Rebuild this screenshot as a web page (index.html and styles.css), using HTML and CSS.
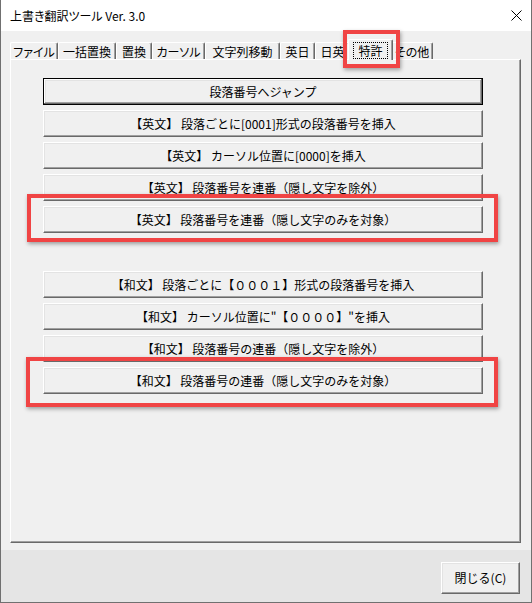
FILE: index.html
```html
<!DOCTYPE html>
<html lang="ja">
<head>
<meta charset="utf-8">
<title>上書き翻訳ツール Ver. 3.0</title>
<link rel="stylesheet" href="styles.css">
</head>
<body>
<div class="window">
  <header class="titlebar">
    <span class="title">上書き翻訳ツール Ver. 3.0</span>
    <svg class="close-x" width="11" height="11" viewBox="0 0 11 11"><path d="M0.5 0.5 L10.5 10.5 M10.5 0.5 L0.5 10.5" stroke="#000" stroke-width="1" fill="none"/></svg>
  </header>
  <main class="client">
    <nav class="tabs">
      <div class="tab tab-file">ファイル</div>
      <div class="tab tab-bulk">一括置換</div>
      <div class="tab tab-replace">置換</div>
      <div class="tab tab-cursor">カーソル</div>
      <div class="tab tab-move">文字列移動</div>
      <div class="tab tab-ej">英日</div>
      <div class="tab tab-je">日英</div>
      <div class="tab tab-patent tab-active"><span class="focus">特許</span></div>
      <div class="tab tab-other">その他</div>
    </nav>
    <section class="panel">
      <div class="group">
        <button class="btn btn-wide btn-default">段落番号へジャンプ</button>
        <button class="btn btn-wide">【英文】 段落ごとに[0001]形式の段落番号を挿入</button>
        <button class="btn btn-wide">【英文】 カーソル位置に[0000]を挿入</button>
        <button class="btn btn-wide">【英文】 段落番号を連番（隠し文字を除外）</button>
        <button class="btn btn-wide">【英文】 段落番号を連番（隠し文字のみを対象）</button>
      </div>
      <div class="group group-second">
        <button class="btn btn-wide">【和文】 段落ごとに【０００１】形式の段落番号を挿入</button>
        <button class="btn btn-wide">【和文】 カーソル位置に"【００００】"を挿入</button>
        <button class="btn btn-wide">【和文】 段落番号の連番（隠し文字を除外）</button>
        <button class="btn btn-wide">【和文】 段落番号の連番（隠し文字のみを対象）</button>
      </div>
    </section>
  </main>
  <footer class="footer">
    <button class="btn btn-close">閉じる(C)</button>
  </footer>
  <div class="mark mark-tab"></div>
  <div class="mark mark-en"></div>
  <div class="mark mark-ja"></div>
</div>
</body>
</html>
```
FILE: styles.css
```css
html, body {
  margin: 0;
  padding: 0;
  background: #ffffff;
}

body {
  font-family: "Noto Sans CJK JP", "Noto Sans", sans-serif;
  font-size: 12px;
  color: #000;
}

.window {
  position: relative;
  width: 532px;
  height: 603px;
  box-sizing: border-box;
  border: 1px solid #707070;
  border-top: none;
  display: flex;
  flex-direction: column;
  background: #f0f0f0;
}

.titlebar {
  height: 31px;
  flex: none;
  background: #ffffff;
  display: flex;
  align-items: center;
  justify-content: space-between;
  padding: 0 9px 0 9px;
}

.title {
  font-size: 12px;
  line-height: 1;
  font-feature-settings: "palt";
  padding-top: 1px;
}

.close-x {
  display: block;
}

.client {
  flex: 1;
  display: flex;
  flex-direction: column;
  padding: 11px 10px 7px 9px;
  background: #f0f0f0;
}

.tabs {
  display: flex;
  height: 17px;
  position: relative;
  z-index: 1;
}

.tab {
  box-sizing: border-box;
  height: 17px;
  padding-top: 2px;
  background: #f0f0f0;
  border-top: 1px solid #ffffff;
  border-left: 1px solid #ffffff;
  border-right: 1px solid #696969;
  box-shadow: inset -1px 0 #a0a0a0;
  border-radius: 2px 2px 0 0;
  font-size: 12px;
  line-height: 13px;
  font-feature-settings: "palt";
  white-space: nowrap;
  text-align: center;
  flex: none;
}

.tab-file { width: 48px; }
.tab-bulk { width: 58px; }
.tab-replace { width: 36px; }
.tab-cursor { width: 53px; }
.tab-move { width: 75px; }
.tab-ej { width: 35px; }
.tab-je { width: 35px; }
.tab-patent { width: 41px; }
.tab-other { width: 42px; }

.tab-active {
  width: 45px;
  height: 21px;
  margin: -3px -2px 0;
  padding-top: 3px;
  position: relative;
  z-index: 2;
}

.focus {
  display: inline-block;
  outline: 1px dotted #000;
  outline-offset: 0;
  padding: 1px 4px;
  line-height: 13px;
}

.panel {
  height: 484px;
  box-sizing: border-box;
  background: #f0f0f0;
  border-top: 1px solid #ffffff;
  border-left: 1px solid #ffffff;
  border-right: 1px solid #696969;
  border-bottom: 1px solid #696969;
  box-shadow: inset -1px -1px #a0a0a0;
  padding: 18px 0 0 32px;
}

.group {
  display: flex;
  flex-direction: column;
  gap: 5px;
}

.group-second {
  margin-top: 38px;
}

.btn {
  box-sizing: border-box;
  background: #f0f0f0;
  border: 1px solid;
  border-color: #ffffff #696969 #696969 #ffffff;
  box-shadow: inset -1px -1px #a0a0a0, inset 1px 1px #e3e3e3;
  font-family: "Noto Sans CJK JP", "Noto Sans", sans-serif;
  font-size: 12px;
  line-height: 1;
  color: #000;
  padding: 0;
  margin: 0;
  text-align: center;
}

.btn-wide {
  width: 440px;
  height: 27px;
}

.btn-default {
  border-color: #000;
  box-shadow: inset -1px -1px #696969, inset 1px 1px #ffffff, inset -2px -2px #a0a0a0, inset 2px 2px #e3e3e3;
}

.footer {
  height: 52px;
  flex: none;
  box-sizing: border-box;
  background: #e5e5e5;
  display: flex;
  justify-content: flex-end;
  align-items: flex-start;
  padding: 12px 11px 0 0;
}

.btn-close {
  width: 79px;
  height: 32px;
}

.mark {
  position: absolute;
  box-sizing: border-box;
  border: 4px solid #f04444;
  box-shadow: 1px 2px 4px rgba(0, 0, 0, 0.35);
  z-index: 5;
}

.mark-tab {
  left: 342px;
  top: 30px;
  width: 57px;
  height: 38px;
}

.mark-en {
  left: 26px;
  top: 194px;
  width: 471px;
  height: 48px;
}

.mark-ja {
  left: 25px;
  top: 357px;
  width: 472px;
  height: 50px;
}
```
